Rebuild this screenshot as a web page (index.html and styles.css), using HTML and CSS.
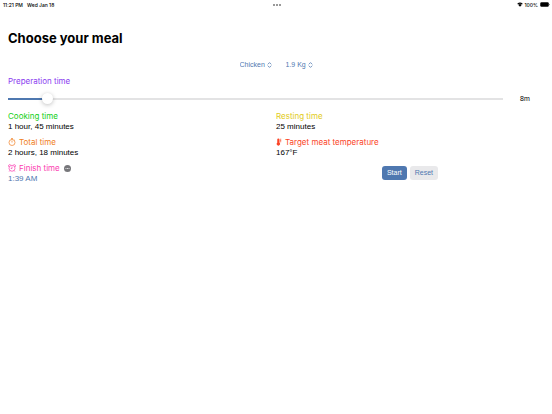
FILE: index.html
```html
<!DOCTYPE html>
<html lang="en">
<head>
<meta charset="utf-8">
<meta name="viewport" content="width=device-width, initial-scale=1">
<title>Choose your meal</title>
<link rel="stylesheet" href="styles.css">
</head>
<body>
<header class="status">
  <div class="status-left"><span>11:21 PM</span><span>Wed Jan 18</span></div>
  <svg class="dots" viewBox="0 0 10 4" aria-hidden="true"><circle cx="2" cy="2" r="1"/><circle cx="5" cy="2" r="1"/><circle cx="8" cy="2" r="1"/></svg>
  <div class="status-right">
    <svg class="wifi" viewBox="0 0 12 10" aria-hidden="true"><path d="M0.5 3.6a8 8 0 0 1 11 0L10 5.2a5.8 5.8 0 0 0-8 0zM2.6 5.8a5 5 0 0 1 6.8 0L6 9.5z"/></svg>
    <span>100%</span>
    <svg class="battery" viewBox="0 0 20 10" aria-hidden="true"><rect x="0.5" y="0.5" width="17" height="9" rx="2.5"/><path d="M18.5 3.4a2 2 0 0 1 0 3.2z"/></svg>
  </div>
</header>
<main class="page">
  <h1 class="title">Choose your meal</h1>
  <div class="pickers">
    <label class="picker"><select aria-label="Meat"><option>Chicken</option></select>
      <svg class="chevrons" viewBox="0 0 10 12" aria-hidden="true"><path d="M1.5 4.7 5 1.2l3.5 3.5M1.5 7.3 5 10.8l3.5-3.5"/></svg></label>
    <label class="picker"><select aria-label="Weight"><option>1.9 Kg</option></select>
      <svg class="chevrons" viewBox="0 0 10 12" aria-hidden="true"><path d="M1.5 4.7 5 1.2l3.5 3.5M1.5 7.3 5 10.8l3.5-3.5"/></svg></label>
  </div>
  <label class="label purple" for="prep">Preperation time</label>
  <div class="slider-row">
    <input class="slider" id="prep" type="range" min="0" max="115" value="8">
    <output class="slider-value" for="prep">8m</output>
  </div>
  <div class="grid">
    <section>
      <h2 class="label green">Cooking time</h2>
      <p class="value">1 hour, 45 minutes</p>
    </section>
    <section>
      <h2 class="label yellow">Resting time</h2>
      <p class="value">25 minutes</p>
    </section>
    <section>
      <h2 class="label orange"><svg class="icon" viewBox="0 0 16 16" aria-hidden="true"><circle cx="8" cy="9" r="6"/><path d="M6 1.2h4M8 1.2V3M12.3 3.5l1.2 1.2M8 5.5V9"/></svg>Total time</h2>
      <p class="value">2 hours, 18 minutes</p>
    </section>
    <section>
      <h2 class="label red"><svg class="icon thermo" viewBox="0 0 10 16" aria-hidden="true"><path class="body" d="M1.5 3a2 2 0 0 1 4.5 0v6.5a3.3 3.3 0 1 1-4.5 0z"/><path d="M7 2.5h2.500M7 5h2.500M7 7.500h2.500"/></svg>Target meat temperature</h2>
      <p class="value">167°F</p>
    </section>
    <section>
      <h2 class="label pink"><svg class="icon" viewBox="0 0 16 16" aria-hidden="true"><circle cx="8" cy="8.5" r="6"/><path d="M8 5v4H5.5M1.2 5.5A3 3 0 0 1 5 1.3M11 1.3A3 3 0 0 1 14.8 5.5M4 13l-1.7 2M12 13l1.7 2"/></svg>Finish time<button class="more" type="button" aria-label="More"><svg viewBox="0 0 14 14" aria-hidden="true"><circle cx="7" cy="7" r="7"/><path d="M3 7h2M6 7h2M9 7h2"/></svg></button></h2>
      <p class="value blue">1:39 AM</p>
    </section>
    <div class="actions">
      <button class="btn primary" type="button">Start</button>
      <button class="btn" type="button">Reset</button>
    </div>
  </div>
</main>
</body>
</html>
```
FILE: styles.css
```css
:root {
  --blue: #4f78b0;
  --display: Inter, "Liberation Sans", sans-serif;
  --text: "Liberation Sans", Arial, sans-serif;
}
* {
  box-sizing: border-box;
}
body {
  margin: 0;
  background: #fff;
  color: #000;
  font: 8px/10px var(--text);
}
h1, h2, p {
  margin: 0;
}
svg {
  display: block;
}
button {
  font: inherit;
  border: 0;
  padding: 0;
}
.status {
  display: grid;
  grid-template-columns: 1fr auto 1fr;
  align-items: center;
  height: 9px;
  padding: 0 2px 0 3px;
  font-family: var(--display);
  font-size: 5px;
  line-height: 8px;
  font-weight: 500;
}
.status-left {
  display: flex;
  gap: 4px;
}
.status-right {
  display: flex;
  justify-content: flex-end;
  align-items: center;
  gap: 2px;
}
.dots {
  width: 10px;
  height: 4px;
  fill: #777;
}
.wifi {
  width: 6px;
  height: 5px;
}
.battery {
  width: 10px;
  height: 5px;
}
.page {
  padding: 19px 8px 0;
}
.title {
  font-family: var(--display);
  font-size: 13px;
  line-height: 20px;
  font-weight: 700;
}
.pickers {
  display: flex;
  justify-content: center;
  gap: 14px;
  padding: 12px 0 5px;
}
.picker {
  display: flex;
  align-items: center;
  gap: 1px;
  color: var(--blue);
}
.picker select {
  appearance: none;
  height: 10px;
  padding: 0;
  border: 0;
  background: none;
  color: inherit;
  font: 7px/10px var(--text);
}
.chevrons {
  width: 5px;
  height: 6px;
  fill: none;
  stroke: currentColor;
  stroke-width: 1.6;
}
.label {
  display: flex;
  align-items: center;
  font-family: var(--display);
  font-size: 8px;
  line-height: 12px;
  font-weight: 400;
}
.purple { color: #8b3df0; }
.green { color: #12cf16; }
.yellow { color: #e2cb20; }
.orange { color: #f08022; }
.red { color: #fb4527; }
.pink { color: #fb3db0; }
.blue { color: var(--blue); }
.slider-row {
  display: flex;
  align-items: center;
  gap: 17px;
  height: 23px;
}
.slider {
  flex: 1;
  min-width: 0;
  height: 16px;
  margin: 0;
  appearance: none;
  background: linear-gradient(var(--blue), var(--blue)) 0 center / 36px 2px no-repeat,
    linear-gradient(#e3e3e4, #e3e3e4) 0 center / 100% 2px no-repeat;
}
.slider::-webkit-slider-thumb {
  appearance: none;
  width: 11px;
  height: 11px;
  border-radius: 50%;
  background: #fff;
  box-shadow: 0 1px 4px rgba(0, 0, 0, .25);
}
.slider-value {
  width: 24px;
  font-size: 7px;
}
.grid {
  display: grid;
  grid-template-columns: 1fr 1fr;
  row-gap: 4px;
}
.icon {
  width: 8px;
  height: 8px;
  margin-right: 3px;
  fill: none;
  stroke: currentColor;
  stroke-width: 1.4;
}
.thermo {
  width: 6px;
}
.thermo .body {
  fill: currentColor;
  stroke: none;
}
.more {
  width: 7px;
  height: 7px;
  margin-left: 4px;
  background: none;
}
.more svg {
  width: 7px;
  height: 7px;
  fill: #77777b;
  stroke: #fff;
  stroke-width: 0;
}
.more path {
  stroke-width: 1.5;
}
.actions {
  display: flex;
  justify-content: center;
  align-items: center;
  gap: 3px;
}
.btn {
  height: 14px;
  padding: 0 5px;
  border-radius: 3px;
  background: #e9e9eb;
  color: var(--blue);
  font-size: 7px;
}
.primary {
  background: var(--blue);
  color: #fff;
}
```
